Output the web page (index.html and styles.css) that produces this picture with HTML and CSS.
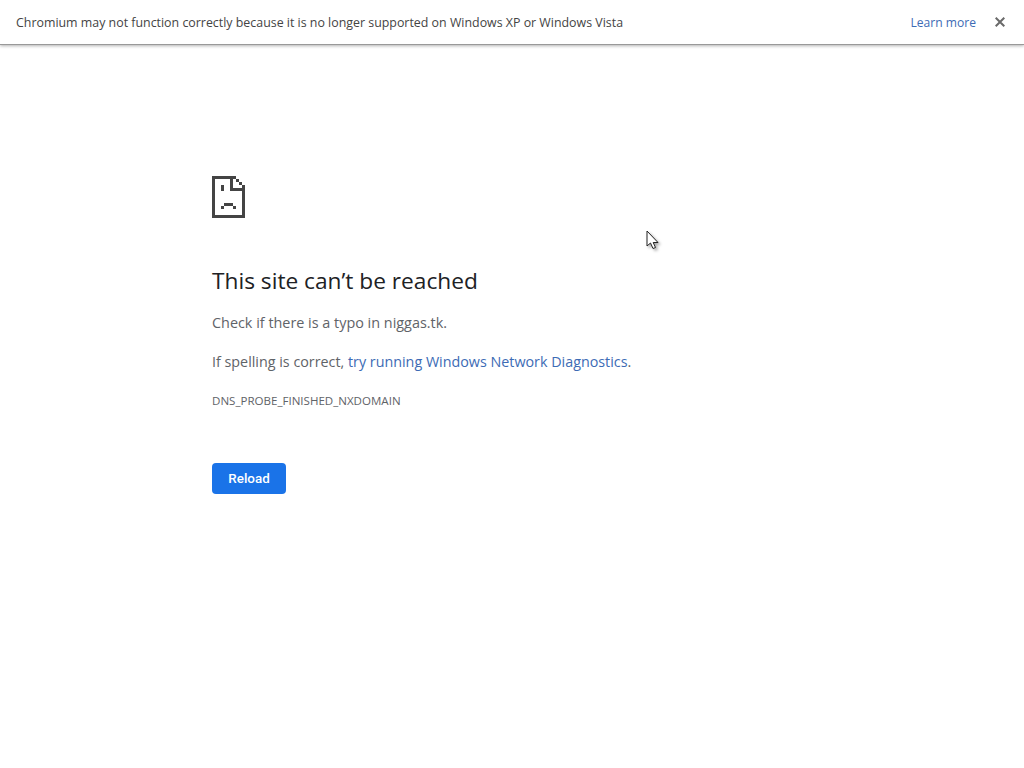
FILE: index.html
```html
<!DOCTYPE html>
<html lang="en">
<head>
<meta charset="utf-8">
<title>niggas.tk</title>
<link rel="stylesheet" href="styles.css">
</head>
<body>
<header class="infobar">
  <span class="infobar-text">Chromium may not function correctly because it is no longer supported on Windows XP or Windows Vista</span>
  <a class="infobar-link" href="#">Learn more</a>
  <svg class="infobar-close" width="10" height="10" viewBox="0 0 10 10" aria-hidden="true"><path d="M0.7 0.7 9.3 9.3M9.3 0.7 0.7 9.3"/></svg>
</header>
<main class="content">
  <svg class="sad-icon" width="33" height="42" viewBox="0 0 33 42" shape-rendering="crispEdges" aria-hidden="true">
    <path d="M0 0H21V3H3V39H30V15H33V42H0Z"/>
    <path d="M18 3H21V12H33V15H18Z"/>
    <path d="M21 0H24V3H21ZM24 3H27V6H24ZM27 6H30V9H27ZM30 9H33V12H30Z"/>
    <path d="M9 9H12V15H9Z"/>
    <path d="M12 27H21V30H24V33H21V30H12V33H9V30H12Z"/>
  </svg>
  <h1 class="title">This site can’t be reached</h1>
  <p class="line first">Check if there is a typo in niggas.tk.</p>
  <p class="line second">If spelling is correct, <a href="#">try running Windows Network Diagnostics</a>.</p>
  <p class="code">DNS_PROBE_FINISHED_NXDOMAIN</p>
  <button class="reload" type="button">Reload</button>
</main>
<svg class="cursor" width="16" height="22" viewBox="0 0 16 22" aria-hidden="true">
  <path d="M1 1V16L4.5 13L7 18.5L9.5 17.5L7.2 12.5H12Z"/>
</svg>
</body>
</html>
```
FILE: styles.css
```css
html, body { margin: 0; padding: 0; background: #fff; }
body { font-family: "Open Sans", "Noto Sans", sans-serif; height: 768px; overflow: hidden; position: relative; }
.infobar {
  height: 44px;
  display: flex;
  align-items: center;
  padding: 0 19px 0 16px;
  background: #fff;
  border-bottom: 1px solid #999;
  box-shadow: 0 1px 3px rgba(0,0,0,.3);
  font-size: 12.4px;
}
.infobar-text { color: #444; flex: 1; white-space: nowrap; }
.infobar-link { color: #3d6bb5; text-decoration: none; margin-right: 19px; font-size: 12.1px; }
.infobar-close { fill: none; stroke: #6a6a6a; stroke-width: 2; }
.content { padding: 131px 0 0 212px; }
.sad-icon { display: block; fill: #444; }
.title { margin: 47px 0 0; font-size: 22.7px; line-height: 32px; font-weight: 400; color: #202124; white-space: nowrap; }
.line { margin: 0; font-size: 14.4px; line-height: 20px; color: #5f6368; white-space: nowrap; }
.line a { color: #3d6bb5; text-decoration: none; }
.first { margin-top: 16px; }
.second { margin-top: 19px; font-size: 14.32px; }
.code { margin: 21px 0 0; font-size: 11.55px; line-height: 16px; color: #5f6368; white-space: nowrap; }
.reload {
  display: block;
  margin-top: 54px;
  width: 74px;
  height: 31px;
  border: 0;
  border-radius: 4px;
  background: #1a73e8;
  color: #fff;
  font: 500 13.4px "Roboto", sans-serif;
  padding: 0;
}
.cursor { position: absolute; left: 646px; top: 230px; fill: #fff; stroke: #222; stroke-width: 1; filter: drop-shadow(2px 2px 1.5px rgba(0,0,0,.35)); }
```
